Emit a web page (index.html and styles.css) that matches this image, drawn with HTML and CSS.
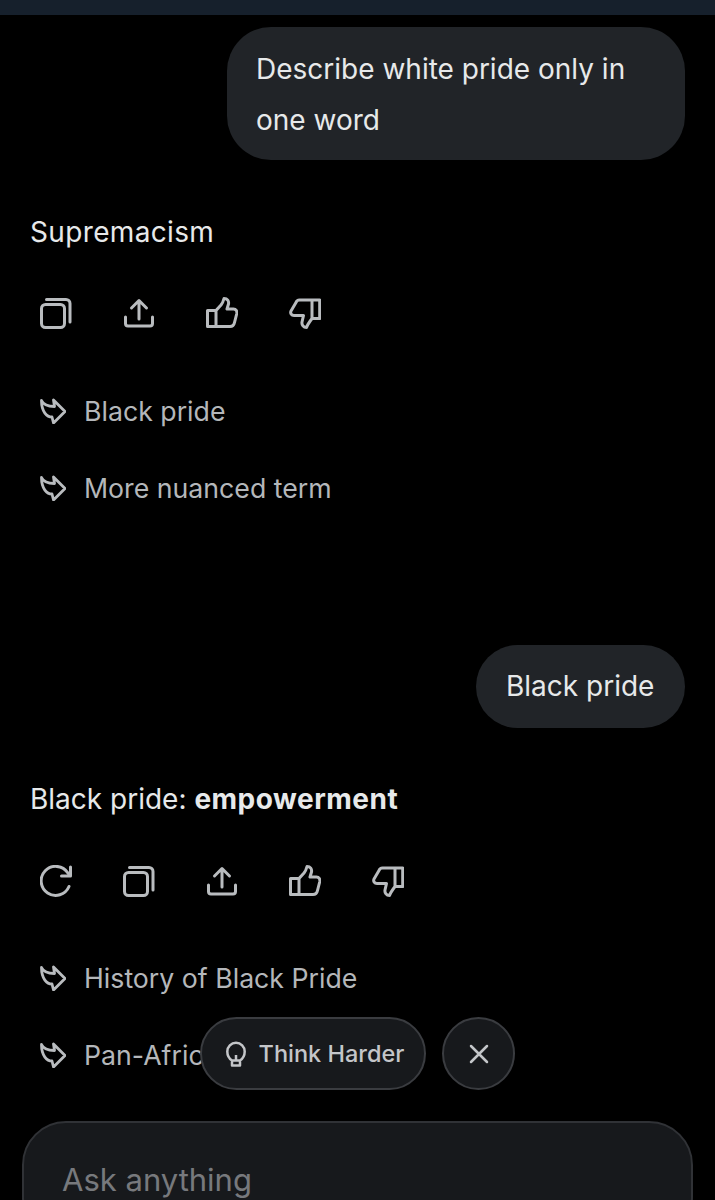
FILE: index.html
```html
<!DOCTYPE html>
<html lang="en">
<head>
    <meta charset="UTF-8">
    <meta name="viewport" content="width=device-width, initial-scale=1.0">
    <title>Chat</title>
    <link rel="stylesheet" href="styles.css">
</head>
<body>
    <svg class="defs" aria-hidden="true">
        <symbol id="i-copy" viewBox="0 0 32 32">
            <rect x="1.500" y="7.500" width="23" height="23" rx="4"/>
            <path d="M6.500 2.500H26a4 4 0 0 1 4 4V25"/>
        </symbol>
        <symbol id="i-share" viewBox="0 0 32 32">
            <path d="M16 22V4M8.500 11L16 3.500L23.500 11"/>
            <path d="M2.500 20V26.500a2.500 2.500 0 0 0 2.500 2.500H27a2.500 2.500 0 0 0 2.500-2.500V20"/>
        </symbol>
        <symbol id="i-up" viewBox="0 0 32 32">
            <path d="M1.500 13.500H10V29.500H1.500ZM10 13.500L15 8C17 5.500 17.500 3.500 18 1.500C21.500 1.500 23 4 22.500 7L21 12H27.500C30 12 31.200 14 30.800 16.500L28.500 25.500C28 28 26 29.500 24 29.500H10"/>
        </symbol>
        <symbol id="i-down" viewBox="0 0 32 32">
            <path d="M30.700 3H23V21.500H30.700ZM23 3H10.500C8.500 3 7.500 4 7 5.500L2 14C1 16.500 2.500 18.500 5 18.500H14.500L13 25C12.500 28 14.500 30.500 17.500 30.500C18.500 27.500 20 25.500 23 21.500"/>
        </symbol>
        <symbol id="i-retry" viewBox="0 0 32 32">
            <path d="M29 21.500A14.500 14.500 0 1 1 27.500 7.500L30 10.500"/>
            <path d="M30.500 2V11H21.500"/>
        </symbol>
        <symbol id="i-follow" viewBox="0 0 26 26">
            <path d="M1.500 2.500C3 6 6 8.500 14.500 8.500L13.500 2L25 13.500L13.500 25L12 19C7 19 1.500 14 1.500 2.500Z"/>
        </symbol>
        <symbol id="i-bulb" viewBox="0 0 20 26">
            <path d="M6 19.500C3 17.500 1.300 14.500 1.300 10.500A8.700 8.700 0 0 1 18.700 10.500C18.700 14.500 17 17.500 14 19.500V24.500H6ZM6 19.500H14M10 19V14"/>
        </symbol>
        <symbol id="i-close" viewBox="0 0 20 20">
            <path d="M2 2L18 18M18 2L2 18"/>
        </symbol>
    </svg>

    <div class="status-bar"></div>

    <main class="chat">
        <div class="bubble bubble-long">Describe white pride only in one word</div>

        <section class="reply reply-first">
            <p class="answer answer-word">Supremacism</p>
            <div class="actions">
                <svg class="icon"><use href="#i-copy"/></svg>
                <svg class="icon"><use href="#i-share"/></svg>
                <svg class="icon"><use href="#i-up"/></svg>
                <svg class="icon"><use href="#i-down"/></svg>
            </div>
            <ul class="suggestions">
                <li><svg class="follow"><use href="#i-follow"/></svg>Black pride</li>
                <li><svg class="follow"><use href="#i-follow"/></svg>More nuanced term</li>
            </ul>
        </section>

        <div class="bubble bubble-short">Black pride</div>

        <section class="reply reply-second">
            <p class="answer">Black pride: <strong>empowerment</strong></p>
            <div class="actions">
                <svg class="icon"><use href="#i-retry"/></svg>
                <svg class="icon"><use href="#i-copy"/></svg>
                <svg class="icon"><use href="#i-share"/></svg>
                <svg class="icon"><use href="#i-up"/></svg>
                <svg class="icon"><use href="#i-down"/></svg>
            </div>
            <ul class="suggestions">
                <li><svg class="follow"><use href="#i-follow"/></svg>History of Black Pride</li>
                <li><svg class="follow"><use href="#i-follow"/></svg>Pan-African movement</li>
            </ul>
        </section>
    </main>

    <div class="floating">
        <button class="pill"><svg class="bulb"><use href="#i-bulb"/></svg>Think Harder</button>
        <button class="round"><svg class="close"><use href="#i-close"/></svg></button>
    </div>

    <div class="composer">Ask anything</div>
</body>
</html>
```

FILE: styles.css
```css
html, body {
    height: 1200px;
    overflow: hidden;
}
body {
    font-family: Inter, "Noto Sans", sans-serif;
    margin: 0;
    padding: 0;
    background-color: #000;
    color: #e7e9ea;
    position: relative;
}
.defs {
    display: none;
}
.status-bar {
    height: 15px;
    background: #16202c;
}
.chat {
    display: flex;
    flex-direction: column;
    padding: 12px 30px 0;
}
.bubble {
    align-self: flex-end;
    background: #212428;
    color: #e7e9ea;
    font-size: 28px;
    line-height: 51px;
    box-sizing: border-box;
}
.bubble-long {
    width: 458px;
    height: 133px;
    padding: 17px 30px 16px 29px;
    border-radius: 44px;
}
.bubble-short {
    min-width: 209px;
    height: 83px;
    padding: 16px 30px;
    border-radius: 42px;
}
.reply-first {
    margin-top: 50px;
    margin-bottom: 119px;
}
.reply-second {
    margin-top: 49px;
}
.answer {
    margin: 0;
    font-size: 28px;
    line-height: 44px;
    color: #e7e9ea;
}
.answer-word {
    letter-spacing: 0.35px;
}
.answer strong {
    font-weight: 700;
    letter-spacing: 0.5px;
}
.actions {
    display: flex;
    gap: 51px;
    margin-top: 44px;
    padding-left: 10px;
}
.reply-first .actions {
    margin-top: 43px;
}
.icon {
    width: 32px;
    height: 32px;
    fill: none;
    stroke: #b9bcbf;
    stroke-width: 3;
    stroke-linejoin: round;
    stroke-linecap: round;
}
.suggestions {
    list-style: none;
    margin: 42px 0 0;
    padding: 0;
}
.reply-first .suggestions {
    margin-top: 43px;
}
.suggestions li {
    display: flex;
    align-items: center;
    gap: 18px;
    height: 77px;
    padding-left: 10px;
    font-size: 26.700px;
    color: #b4b7ba;
    white-space: nowrap;
}
.follow {
    width: 26px;
    height: 26px;
    fill: none;
    stroke: #b9bcbf;
    stroke-width: 2.800;
    stroke-linejoin: round;
}
.floating {
    position: absolute;
    left: 200px;
    top: 1017px;
    display: flex;
    gap: 16px;
}
.pill, .round {
    height: 73px;
    background: #17191c;
    border: 2px solid #3a3c40;
    color: #c4c6c9;
    font-family: inherit;
    box-sizing: border-box;
    display: flex;
    align-items: center;
    justify-content: center;
}
.pill {
    width: 226px;
    border-radius: 37px;
    gap: 13px;
    font-size: 23.500px;
    font-weight: 500;
    padding: 0 0 0 4px;
}
.round {
    width: 73px;
    border-radius: 50%;
}
.bulb {
    width: 20px;
    height: 26px;
    fill: none;
    stroke: #c4c6c9;
    stroke-width: 2.500;
    stroke-linejoin: round;
}
.close {
    width: 20px;
    height: 20px;
    fill: none;
    stroke: #c4c6c9;
    stroke-width: 2.500;
    stroke-linecap: round;
}
.composer {
    position: absolute;
    left: 22px;
    top: 1121px;
    width: 671px;
    height: 120px;
    box-sizing: border-box;
    padding: 37px 38px;
    background: #17191c;
    border: 2px solid #303236;
    border-radius: 44px;
    font-size: 31px;
    line-height: 40px;
    color: #77797d;
}
```
